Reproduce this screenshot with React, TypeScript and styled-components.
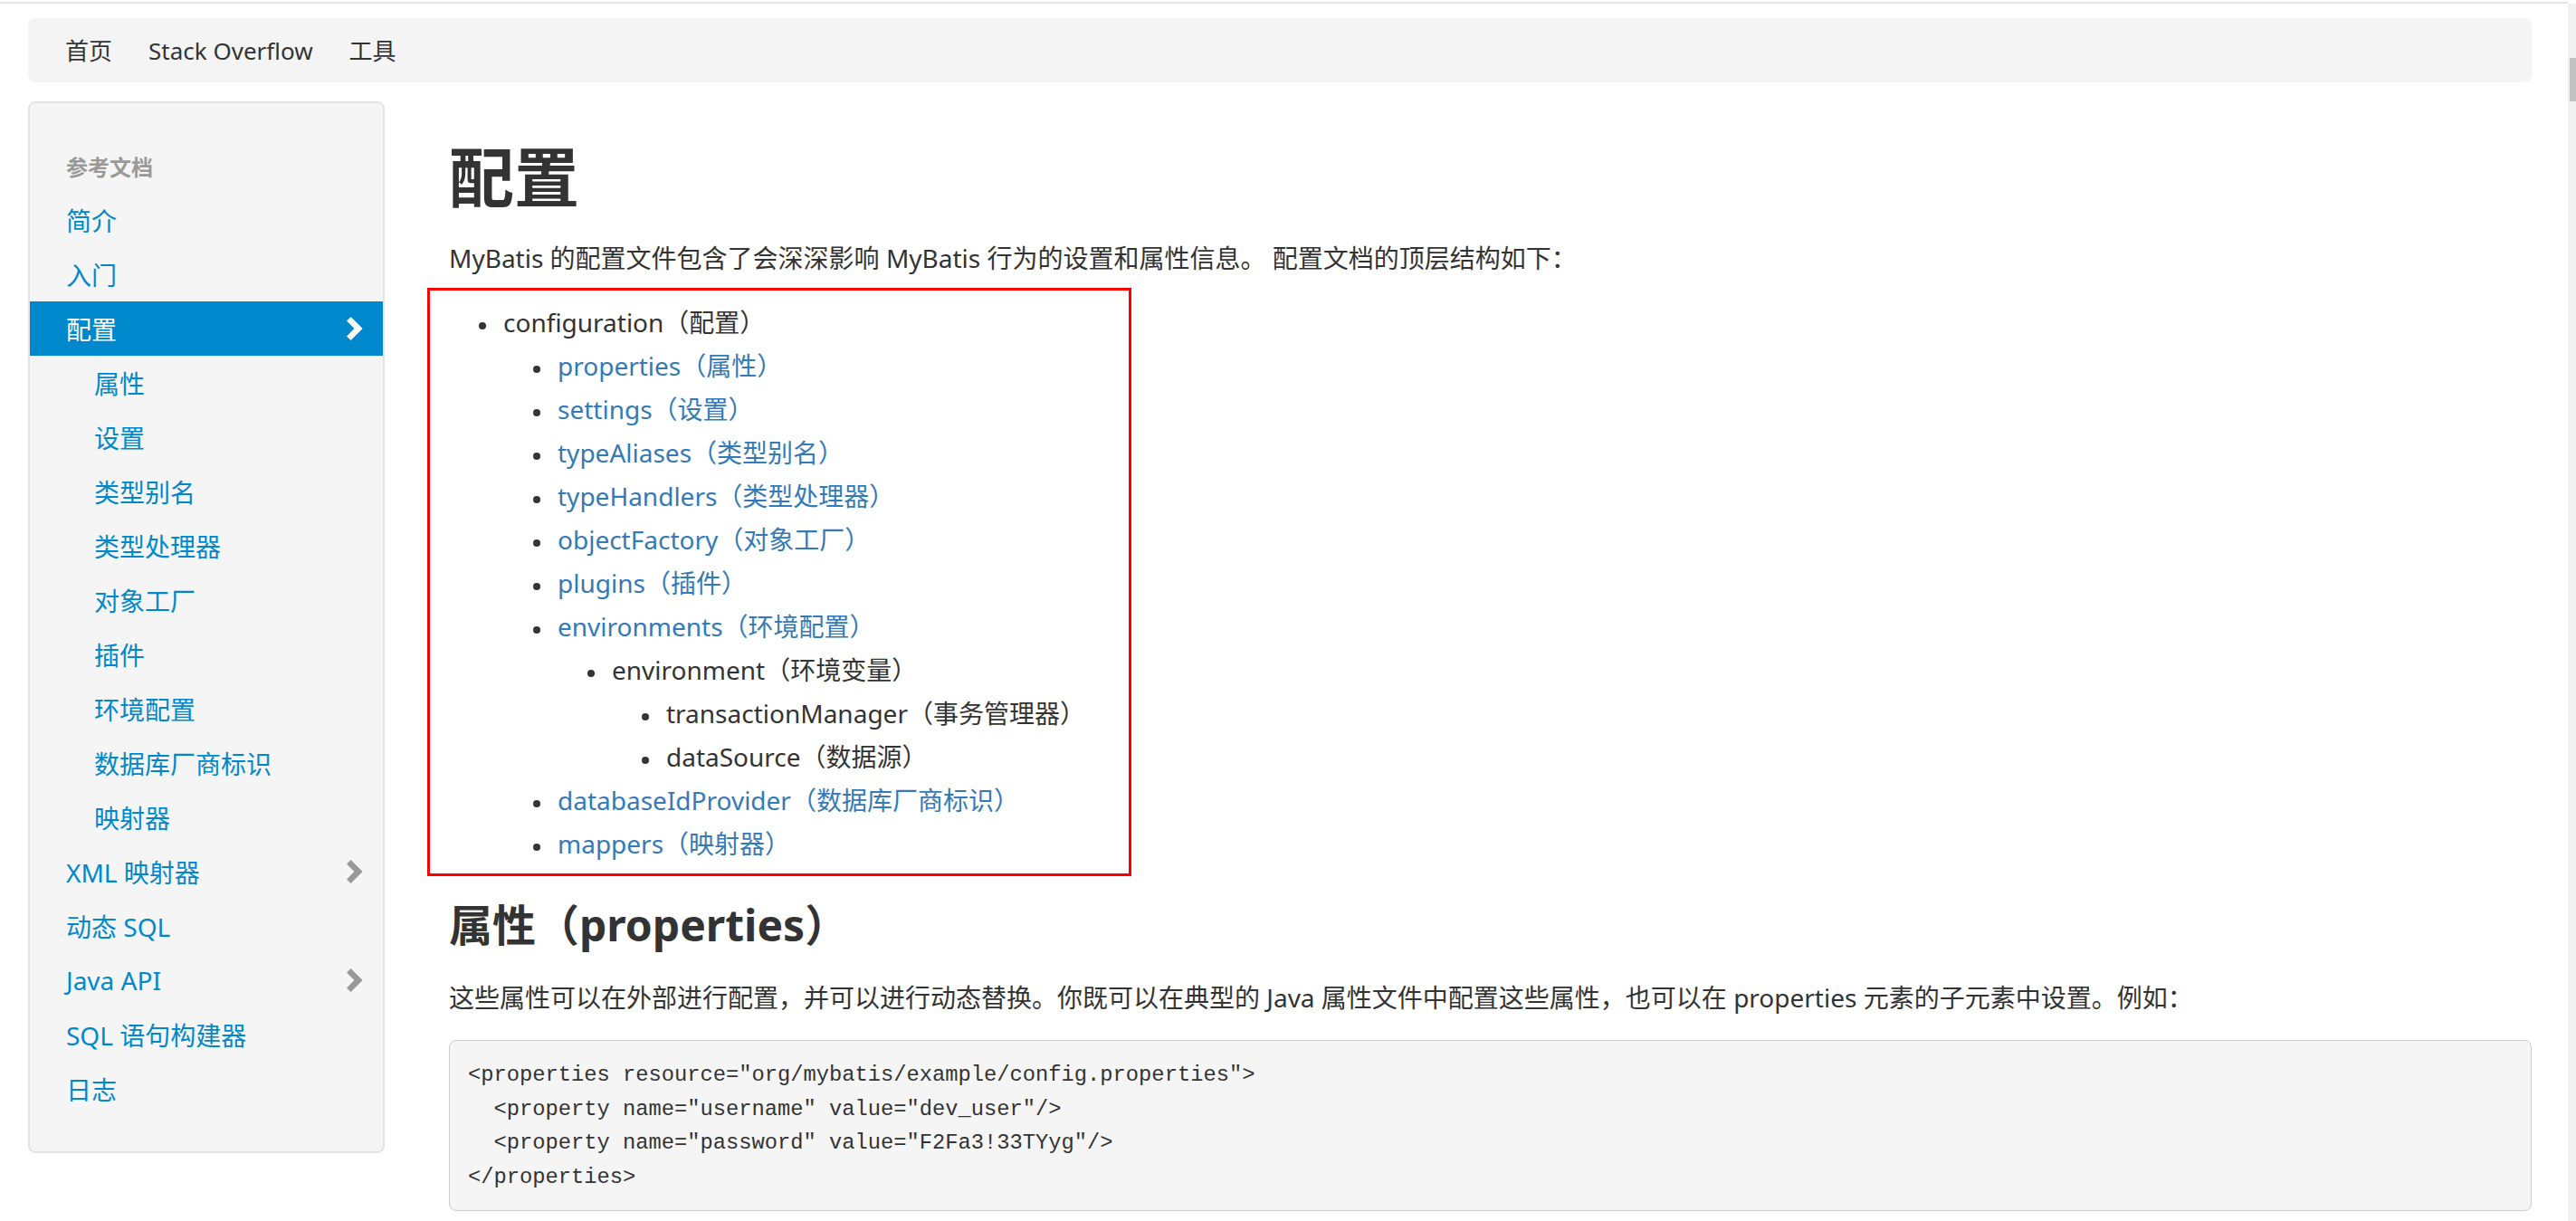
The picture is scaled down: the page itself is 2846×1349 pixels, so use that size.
import React from "react";
import styled, { createGlobalStyle } from "styled-components";

const GlobalStyle = createGlobalStyle`
  html, body { margin: 0; padding: 0; background: #fff; overflow: hidden; }
  body { font-family: "Noto Sans", "Noto Sans CJK SC", sans-serif; color: #333; }
  * { box-sizing: border-box; }
`;

const Page = styled.div`
  min-height: 1349px;
  padding-right: 9px;
`;

const TopRule = styled.div`
  margin-top: 2px;
  height: 2px;
  background: #e4e4e4;
`;

const Container = styled.div`
  padding: 16px 40px 0 31px;
`;

const Navbar = styled.nav`
  height: 71px;
  background: #f4f4f4;
  border-radius: 8px;
  display: flex;
  align-items: center;
  padding-left: 21px;
`;

const NavLink = styled.a`
  font-size: 26px;
  line-height: 40px;
  color: #333;
  padding: 0 20px;
  text-decoration: none;
`;

const Row = styled.div`
  display: flex;
  align-items: flex-start;
  margin-top: 21px;
`;

const Sidebar = styled.aside`
  width: 394px;
  flex: none;
  background: #f5f5f5;
  border: 2px solid #e3e3e3;
  border-radius: 8px;
  padding: 39px 0;
`;

const NavHeader = styled.div`
  height: 60px;
  display: flex;
  align-items: center;
  padding-left: 40px;
  font-size: 24px;
  font-weight: 700;
  color: #999;
`;

const NavItem = styled.a<{ $active?: boolean; $sub?: boolean }>`
  height: 60px;
  display: flex;
  align-items: center;
  justify-content: space-between;
  padding: 0 21px 0 ${(p) => (p.$sub ? 71 : 40)}px;
  font-size: 28px;
  color: ${(p) => (p.$active ? "#fff" : "#0088cc")};
  background: ${(p) => (p.$active ? "#0088cc" : "transparent")};
  text-decoration: none;
`;

const ChevronSvg = styled.svg<{ $light?: boolean }>`
  width: 20px;
  height: 26px;
  flex: none;
  fill: ${(p) => (p.$light ? "#fff" : "#999")};
`;

const Chevron = ({ light }: { light?: boolean }) => (
  <ChevronSvg $light={light} viewBox="0 0 20 26">
    <path d="M1 4.6 L5.6 0 L18.6 13 L5.6 26 L1 21.4 L9.4 13 Z" />
  </ChevronSvg>
);

const Main = styled.main`
  flex: 1;
  min-width: 0;
  margin-left: 71px;
`;

const Title = styled.h1`
  margin: 43px 0 0;
  font-size: 72px;
  line-height: 80px;
  font-weight: 700;
  color: #333;
`;

const Lead = styled.p<{ $top?: number }>`
  margin: ${(p) => p.$top ?? 30}px 0 0;
  font-size: 28px;
  line-height: 40px;
  color: #333;
  white-space: nowrap;
`;

const TreeWrap = styled.div`
  position: relative;
  margin-top: 27px;
`;

const RedFrame = styled.div`
  position: absolute;
  left: -24px;
  top: -14px;
  width: 778px;
  height: 650px;
  border: 3px solid #ff0000;
  pointer-events: none;
`;

const Tree = styled.ul`
  list-style: none;
  margin: 0;
  padding-left: 60px;
`;

const Item = styled.li<{ $link?: boolean }>`
  font-size: 28px;
  line-height: 48px;
  color: ${(p) => (p.$link ? "#337ab7" : "#333")};
  white-space: nowrap;
  &::before {
    content: "";
    display: inline-block;
    width: 8px;
    height: 8px;
    border-radius: 50%;
    background: #333;
    margin-left: -27px;
    margin-right: 19px;
    vertical-align: middle;
  }
`;

const SubTitle = styled.h2`
  margin: 26px 0 0;
  font-size: 48px;
  line-height: 80px;
  font-weight: 700;
  color: #333;
`;

const Code = styled.pre`
  margin: 27px 0 0;
  padding: 19px 20px 18px;
  background: #f5f5f5;
  border: 1px solid #cccccc;
  border-radius: 8px;
  font-family: "Liberation Mono", monospace;
  font-size: 23.75px;
  line-height: 37.5px;
  color: #333;
  white-space: pre;
`;

const ScrollTrack = styled.div`
  position: fixed;
  right: 0;
  top: 4px;
  bottom: 0;
  width: 9px;
  background: #f1f1f1;
`;

const ScrollThumb = styled.div`
  position: absolute;
  left: 2px;
  right: 0;
  top: 60px;
  height: 48px;
  background: #c1c1c1;
`;

const sideItems: { label: string; sub?: boolean; active?: boolean; chevron?: boolean }[] = [
  { label: "简介" },
  { label: "入门" },
  { label: "配置", active: true, chevron: true },
  { label: "属性", sub: true },
  { label: "设置", sub: true },
  { label: "类型别名", sub: true },
  { label: "类型处理器", sub: true },
  { label: "对象工厂", sub: true },
  { label: "插件", sub: true },
  { label: "环境配置", sub: true },
  { label: "数据库厂商标识", sub: true },
  { label: "映射器", sub: true },
  { label: "XML 映射器", chevron: true },
  { label: "动态 SQL" },
  { label: "Java API", chevron: true },
  { label: "SQL 语句构建器" },
  { label: "日志" },
];

const code = `<properties resource="org/mybatis/example/config.properties">
  <property name="username" value="dev_user"/>
  <property name="password" value="F2Fa3!33TYyg"/>
</properties>`;

export default function App() {
  return (
    <Page>
      <GlobalStyle />
      <TopRule />
      <Container>
        <Navbar>
          <NavLink>首页</NavLink>
          <NavLink>Stack Overflow</NavLink>
          <NavLink>工具</NavLink>
        </Navbar>
        <Row>
          <Sidebar>
            <NavHeader>参考文档</NavHeader>
            {sideItems.map((it) => (
              <NavItem key={it.label} $active={it.active} $sub={it.sub}>
                <span>{it.label}</span>
                {it.chevron && <Chevron light={it.active} />}
              </NavItem>
            ))}
          </Sidebar>
          <Main>
            <Title>配置</Title>
            <Lead>MyBatis 的配置文件包含了会深深影响 MyBatis 行为的设置和属性信息。 配置文档的顶层结构如下：</Lead>
            <TreeWrap>
              <RedFrame />
              <Tree>
                <Item>
                  configuration（配置）
                  <Tree>
                    <Item $link>properties（属性）</Item>
                    <Item $link>settings（设置）</Item>
                    <Item $link>typeAliases（类型别名）</Item>
                    <Item $link>typeHandlers（类型处理器）</Item>
                    <Item $link>objectFactory（对象工厂）</Item>
                    <Item $link>plugins（插件）</Item>
                    <Item $link>environments（环境配置）</Item>
                    <Tree>
                      <Item>
                        environment（环境变量）
                        <Tree>
                          <Item>transactionManager（事务管理器）</Item>
                          <Item>dataSource（数据源）</Item>
                        </Tree>
                      </Item>
                    </Tree>
                    <Item $link>databaseIdProvider（数据库厂商标识）</Item>
                    <Item $link>mappers（映射器）</Item>
                  </Tree>
                </Item>
              </Tree>
            </TreeWrap>
            <SubTitle>属性（properties）</SubTitle>
            <Lead $top={20}>
              这些属性可以在外部进行配置，并可以进行动态替换。你既可以在典型的 Java 属性文件中配置这些属性，也可以在 properties 元素的子元素中设置。例如：
            </Lead>
            <Code>{code}</Code>
          </Main>
        </Row>
      </Container>
      <ScrollTrack>
        <ScrollThumb />
      </ScrollTrack>
    </Page>
  );
}
